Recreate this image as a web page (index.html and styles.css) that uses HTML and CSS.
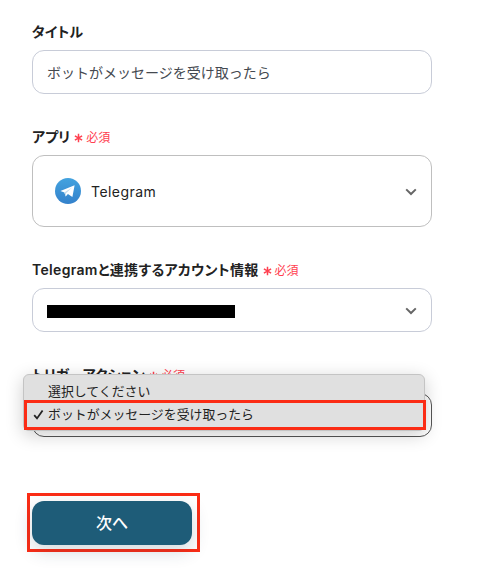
FILE: index.html
```
<!DOCTYPE html>
<html lang="ja">
<head>
    <meta charset="UTF-8">
    <meta name="viewport" content="width=device-width, initial-scale=1.0">
    <title>Telegram</title>
    <link rel="stylesheet" href="styles.css">
</head>
<body>
    <form class="form">
        <div class="field">
            <div class="label"><span class="label-text">タイトル</span></div>
            <div class="control">ボットがメッセージを受け取ったら</div>
        </div>

        <div class="field">
            <div class="label">
                <span class="label-text">アプリ</span>
                <span class="required"><svg width="9" height="10" viewBox="0 0 9 10"><path d="M4.5 .8v8.4M.9 2.9l7.2 4.2M8.1 2.9L.9 7.1"/></svg>必須</span>
            </div>
            <div class="control control-app">
                <svg class="app-icon" width="26" height="26" viewBox="0 0 26 26">
                    <defs>
                        <linearGradient id="sky" x1="0" y1="0" x2="0" y2="1">
                            <stop offset="0" stop-color="#43a3df"/>
                            <stop offset="1" stop-color="#3481cb"/>
                        </linearGradient>
                    </defs>
                    <circle cx="13" cy="13" r="13" fill="url(#sky)"/>
                    <path d="M5.4 13L19.6 7.2L17.4 18.9L12.9 16L10.7 18.4L9.4 14.4Z" fill="#fff"/>
                    <path d="M9.4 14.4L17 9.5L11 15.2L10.7 18.4Z" fill="#c5dced"/>
                </svg>
                <span class="app-name">Telegram</span>
                <svg class="chevron" width="12" height="8" viewBox="0 0 12 8"><path d="M1.2 1.4L6 6L10.8 1.4"/></svg>
            </div>
        </div>

        <div class="field">
            <div class="label">
                <span class="label-text label-long">Telegramと連携するアカウント情報</span>
                <span class="required"><svg width="9" height="10" viewBox="0 0 9 10"><path d="M4.5 .8v8.4M.9 2.9l7.2 4.2M8.1 2.9L.9 7.1"/></svg>必須</span>
            </div>
            <div class="control">
                <span class="masked"></span>
                <svg class="chevron" width="12" height="8" viewBox="0 0 12 8"><path d="M1.2 1.4L6 6L10.8 1.4"/></svg>
            </div>
        </div>

        <div class="field">
            <div class="label">
                <span class="label-text">トリガーアクション</span>
                <span class="required"><svg width="9" height="10" viewBox="0 0 9 10"><path d="M4.5 .8v8.4M.9 2.9l7.2 4.2M8.1 2.9L.9 7.1"/></svg>必須</span>
            </div>
            <div class="control control-open"></div>
            <div class="menu">
                <div class="option">選択してください</div>
                <div class="option selected">
                    <svg class="check" width="11" height="11" viewBox="0 0 11 11"><path d="M1.2 6.2L4 9.4L9.6 1.4"/></svg>
                    ボットがメッセージを受け取ったら
                </div>
            </div>
        </div>

        <div class="actions">
            <button type="button" class="next">次へ</button>
        </div>
    </form>
</body>
</html>
```

FILE: styles.css
```
*, *::after {
    box-sizing: border-box;
}
body {
    margin: 0;
    background-color: #fff;
    color: #222;
    font-family: Inter, "Noto Sans CJK JP", sans-serif;
    height: 580px;
    overflow: hidden;
}
svg {
    display: block;
    flex: none;
}
.form {
    width: 400px;
    margin-left: 32px;
    padding-top: 20px;
}
.field {
    position: relative;
    margin-bottom: 31px;
}
.label {
    display: flex;
    align-items: center;
    gap: 4px;
    height: 24px;
    margin-bottom: 6px;
    white-space: nowrap;
}
.label-text {
    font-size: 14px;
    line-height: 24px;
    font-weight: 600;
    font-feature-settings: "palt";
    letter-spacing: 0.1px;
}
.label-long {
    letter-spacing: 0.32px;
}
.required {
    display: flex;
    align-items: center;
    gap: 3px;
    color: #ff4050;
    font-size: 12px;
    line-height: 24px;
    padding-top: 1px;
}
.required path {
    fill: none;
    stroke: #ff4050;
    stroke-width: 1.5;
}
.control {
    display: flex;
    align-items: center;
    height: 44px;
    padding: 0 14px;
    border: 1px solid #c8ccd8;
    border-radius: 12px;
    color: #444950;
    font-size: 14px;
}
.control-app {
    height: 72px;
    padding-left: 22px;
    border-color: #bfbfbf;
}
.control-open {
    border-color: #555;
}
.app-name {
    margin-left: 10px;
    color: #222;
    letter-spacing: 0.45px;
}
.masked {
    width: 188px;
    height: 13px;
    margin-top: 2px;
    background-color: #000;
}
.chevron {
    margin: 2px 0 0 auto;
}
.chevron path {
    fill: none;
    stroke: #666;
    stroke-width: 2;
}
/* open list, lies over the label and the select */
.menu {
    position: absolute;
    top: 11px;
    left: -9px;
    width: 402px;
    height: 57px;
    padding-top: 6px;
    border: 1px solid #c4c4c4;
    border-radius: 6px;
    background-color: #e0e0e0;
    box-shadow: 0 4px 18px rgba(0, 0, 0, 0.2);
}
.option {
    height: 22px;
    padding-left: 24px;
    color: #222;
    font-size: 12.9px;
    line-height: 22px;
    font-weight: 400;
    white-space: nowrap;
}
.selected {
    position: relative;
    padding-top: 1px;
}
.selected::after {
    content: "";
    position: absolute;
    top: -3px;
    left: 0;
    width: 402px;
    height: 30px;
    border: 3px solid #fb2c15;
}
.check {
    position: absolute;
    top: 6px;
    left: 9px;
}
.check path {
    fill: none;
    stroke: #222;
    stroke-width: 1.8;
}
.actions {
    display: flex;
    width: 173px;
    height: 59px;
    margin: 56px 0 0 -5px;
    padding: 5px 4px;
    padding-left: 2px;
    border: 3px solid #fb2c15;
}
.next {
    width: 160px;
    height: 44px;
    padding: 0 0 2px;
    border: none;
    border-radius: 12px;
    background-color: #1e5c78;
    box-shadow: 0 6px 18px rgba(30, 60, 80, 0.2);
    color: #fff;
    font-family: inherit;
    font-size: 16px;
    font-weight: 500;
}
```
